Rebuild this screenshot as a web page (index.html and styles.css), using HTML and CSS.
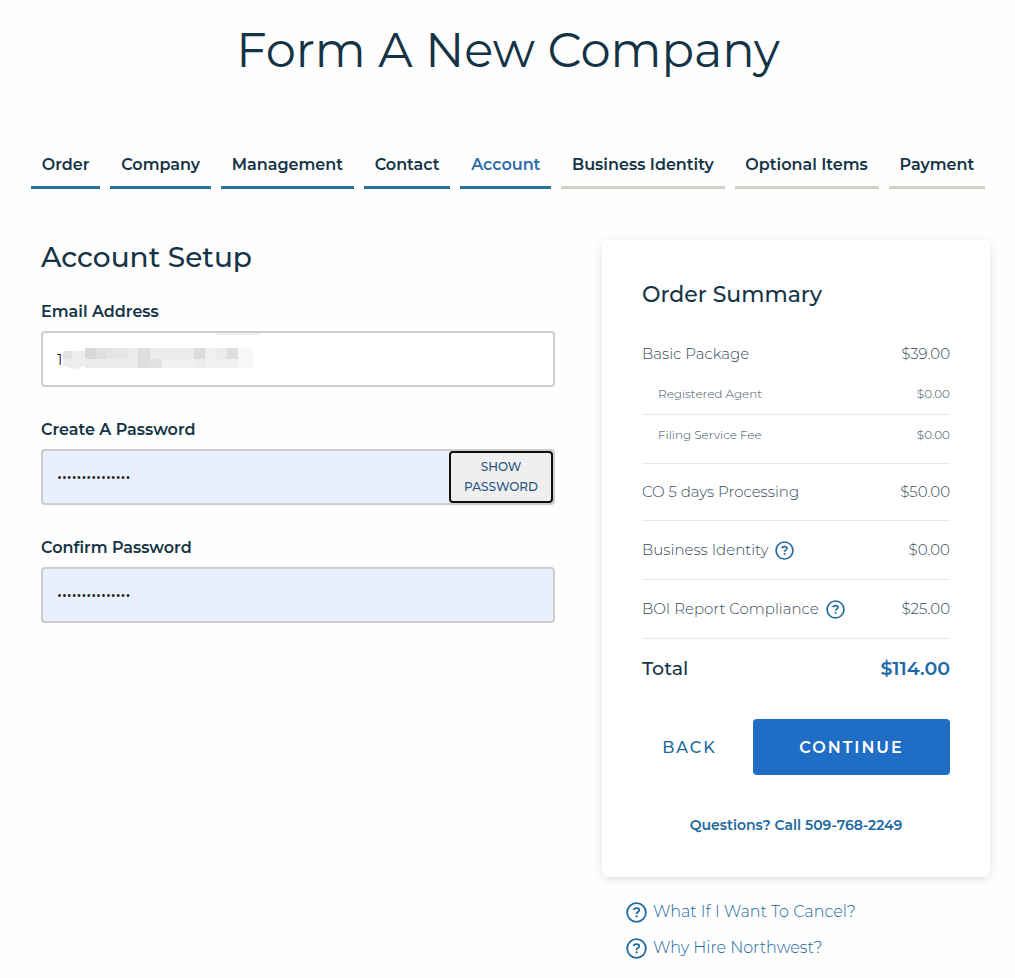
FILE: index.html
```html
<!DOCTYPE html>
<html lang="en">
<head>
  <meta charset="UTF-8">
  <meta name="viewport" content="width=device-width, initial-scale=1">
  <title>Form A New Company</title>
  <link rel="stylesheet" href="styles.css">
</head>
<body>
<svg class="sprite" aria-hidden="true">
  <symbol id="help" viewBox="0 0 22 22">
    <circle cx="11" cy="11" r="9.8" fill="none" stroke="currentColor" stroke-width="1.9"/>
    <path d="M7.9 8.5C8.3 7.1 9.5 6.5 11 6.5c1.7 0 2.9.8 2.9 2.1 0 2-2.8 1.9-2.8 3.9" fill="none" stroke="currentColor" stroke-width="1.9"/>
    <circle cx="11.1" cy="15" r="1.2" fill="currentColor"/>
  </symbol>
</svg>

<header>
  <h1>Form A New Company</h1>
  <nav class="steps">
    <a class="step done" href="#">Order</a>
    <a class="step done" href="#">Company</a>
    <a class="step done" href="#">Management</a>
    <a class="step done" href="#">Contact</a>
    <a class="step done current" href="#">Account</a>
    <a class="step" href="#">Business Identity</a>
    <a class="step" href="#">Optional Items</a>
    <a class="step" href="#">Payment</a>
  </nav>
</header>

<main>
  <form id="account">
    <h2>Account Setup</h2>
    <div class="field">
      <label for="email">Email Address</label>
      <div class="control">
        <input type="text" id="email" value="1">
        <!-- hidden part of the address -->
        <svg class="mask" viewBox="0 0 190 38" aria-hidden="true" shape-rendering="crispEdges">
          <path d="M0 18h22v15l-10 3-12-3z" fill="#ededf0"/>
          <path d="M0 18h9v8H0z" fill="#e2e2e5"/>
          <path d="M22 15h168v20H22z" fill="#ececee"/>
          <path d="M22 15h11v11H22z" fill="#d8d8da"/>
          <path d="M33 15h10v11H33z" fill="#e0e0e2"/>
          <path d="M43 15h22v11H43z" fill="#e5e5e7"/>
          <path d="M75 15h12v20H75z" fill="#dfdfe1"/>
          <path d="M87 26h12v9H87z" fill="#e2e2e4"/>
          <path d="M99 26h34v9H99z" fill="#f0f1f3"/>
          <path d="M131 15h11v11h-11z" fill="#dcdcde"/>
          <path d="M142 15h11v11h-11z" fill="#f0f0f2"/>
          <path d="M164 15h11v11h-11z" fill="#dedee0"/>
          <path d="M142 26h33v9h-33z" fill="#f1f1f3"/>
          <path d="M175 15h15v20h-15z" fill="#f8f8f8"/>
          <path d="M152 0h45v2h-45z" fill="#f0f0ee"/>
        </svg>
      </div>
    </div>
    <div class="field">
      <label for="password">Create A Password</label>
      <div class="control filled">
        <input type="password" id="password" value="northwest123456">
        <button type="button" id="toggle">SHOW PASSWORD</button>
      </div>
    </div>
    <div class="field">
      <label for="confirm">Confirm Password</label>
      <div class="control filled">
        <input type="password" id="confirm" value="northwest123456">
      </div>
    </div>
  </form>

  <aside>
    <section class="summary">
      <h3>Order Summary</h3>
      <table>
        <tr><td>Basic Package</td><td>$39.00</td></tr>
        <tr class="sub line"><td>Registered Agent</td><td>$0.00</td></tr>
        <tr class="sub last line"><td>Filing Service Fee</td><td>$0.00</td></tr>
        <tr class="state line"><td>CO 5 days Processing</td><td>$50.00</td></tr>
        <tr class="extra line"><td><span class="hint">Business Identity <svg><use href="#help"/></svg></span></td><td>$0.00</td></tr>
        <tr class="extra line"><td><span class="hint">BOI Report Compliance <svg><use href="#help"/></svg></span></td><td>$25.00</td></tr>
        <tr class="total"><td>Total</td><td>$114.00</td></tr>
      </table>
      <div class="actions">
        <button type="button" class="back">BACK</button>
        <button type="submit" class="continue" form="account">CONTINUE</button>
      </div>
      <a class="call" href="tel:5097682249">Questions? Call 509-768-2249</a>
    </section>
    <div class="faq">
      <a href="#"><svg><use href="#help"/></svg>What If I Want To Cancel?</a>
      <a href="#"><svg><use href="#help"/></svg>Why Hire Northwest?</a>
    </div>
  </aside>
</main>
</body>
</html>
```
FILE: styles.css
```css
* {
  box-sizing: border-box;
}

body {
  margin: 0;
  padding: 20px 25px 16px 31px;
  background-color: #fefefe;
  color: #143446;
  font-family: Montserrat, Inter, "Liberation Sans", sans-serif;
  font-size: 16px;
}

a {
  color: #20699f;
  text-decoration: none;
}

button {
  font-family: inherit;
  cursor: pointer;
}

.sprite {
  display: none;
}

header {
  margin-right: 5px;
}

h1 {
  margin: 0 0 72px;
  font-size: 48px;
  font-weight: 400;
  line-height: 60px;
  text-align: center;
}

.steps {
  display: flex;
  gap: 10px;
}

.step {
  flex: 1 1 auto;
  padding-bottom: 8px;
  border-bottom: 3px solid #d3d0ca;
  color: #143446;
  font-weight: 600;
  line-height: 26px;
  text-align: center;
  white-space: nowrap;
}

.step.done {
  border-bottom-color: #2a7199;
}

.step.current {
  color: #2c6cab;
}

main {
  display: grid;
  grid-template-columns: minmax(0, 1fr) 388px;
  gap: 47px;
  margin-top: 51px;
  padding-left: 10px;
}

h2 {
  margin: 0 0 27px;
  font-size: 28px;
  font-weight: 500;
  line-height: 34px;
}

.field {
  margin-bottom: 32px;
}

.field label {
  display: block;
  margin-bottom: 8px;
  font-weight: 600;
  line-height: 22px;
}

.control {
  position: relative;
  display: flex;
  height: 56px;
  border: 2px solid #cfcdca;
  border-radius: 4px;
  background-color: #fff;
}

.control.filled {
  background-color: #e8f0fe;
}

.control input {
  flex: 1;
  min-width: 0;
  padding: 0 14px;
  border: 0;
  background: transparent;
  color: #222;
  font-family: inherit;
  font-size: 15px;
  outline: none;
}

.control input[type=password] {
  font-family: "Open Sans", sans-serif;
  font-size: 13px;
}

.mask {
  position: absolute;
  left: 20px;
  top: 0;
  width: 190px;
  height: 38px;
  overflow: visible;
}

#toggle {
  width: 104px;
  padding: 0;
  border: 2px solid #101010;
  border-radius: 4px;
  background-color: #efefef;
  color: #285580;
  font-size: 12px;
  font-weight: 500;
  line-height: 20px;
}

.summary {
  padding: 40px;
  border-radius: 6px;
  background-color: #fff;
  box-shadow: 0 2px 8px rgba(0, 0, 0, .12);
}

h3 {
  margin: 0 0 24px;
  font-size: 22px;
  font-weight: 500;
  line-height: 30px;
}

table {
  width: 100%;
  border-spacing: 0;
}

td {
  height: 40px;
  padding: 0;
  color: #34495a;
  font-size: 15px;
  font-weight: 300;
  line-height: 20px;
}

td:last-child {
  text-align: right;
}

.line td {
  border-bottom: 1px solid #e6e8e9;
}

.sub td {
  height: 41px;
  font-size: 12px;
}

.sub td:first-child {
  padding-left: 16px;
}

.last td {
  height: 49px;
  padding-bottom: 8px;
}

.state td {
  height: 57px;
}

.extra td {
  height: 59px;
}

.hint {
  display: flex;
  align-items: center;
  gap: 7px;
}

.hint svg {
  width: 19px;
  height: 19px;
  color: #20699f;
}

.total td {
  height: 60px;
  color: #143446;
  font-size: 19px;
  font-weight: 500;
}

.total td:last-child {
  color: #2069a8;
  font-weight: 600;
}

.actions {
  display: flex;
  margin-top: 20px;
}

.actions button {
  height: 56px;
  padding: 0;
  border: 0;
  border-radius: 4px;
  font-size: 16px;
  letter-spacing: 2px;
}

.actions .back {
  flex: 1;
  padding-right: 16px;
  background: none;
  color: #20699f;
  font-weight: 500;
}

.actions .continue {
  width: 197px;
  background-color: #206dc5;
  color: #fff;
  font-weight: 600;
}

.call {
  display: block;
  margin-top: 38px;
  font-size: 14px;
  font-weight: 600;
  line-height: 24px;
  text-align: center;
}

.faq {
  display: flex;
  flex-direction: column;
  gap: 12px;
  margin-top: 23px;
  padding-left: 24px;
}

.faq a {
  display: flex;
  align-items: center;
  gap: 6px;
  font-weight: 300;
  line-height: 24px;
}

.faq svg {
  width: 21px;
  height: 21px;
}
```
